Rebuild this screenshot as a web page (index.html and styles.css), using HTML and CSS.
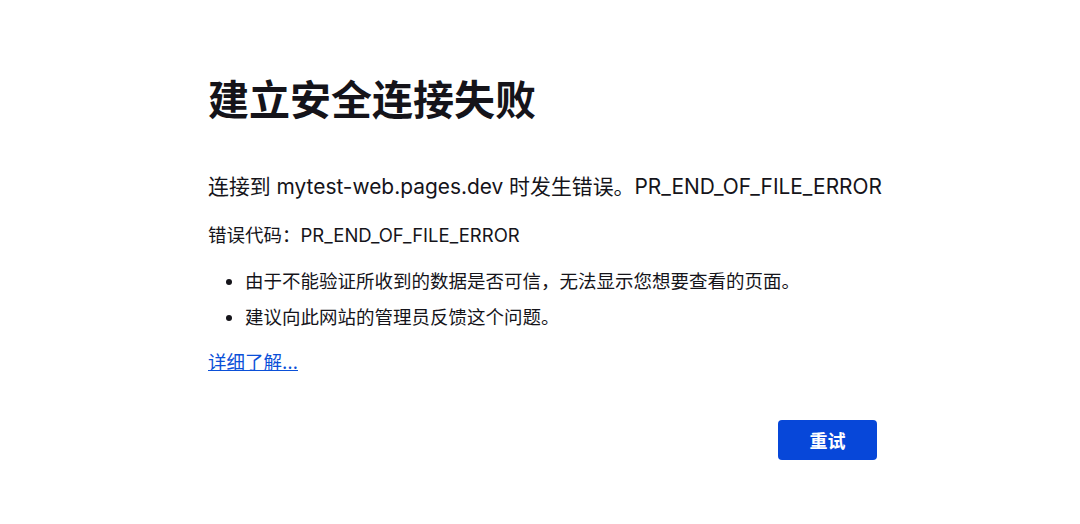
FILE: index.html
```html
<!DOCTYPE html>
<html lang="zh-CN">
<head>
<meta charset="utf-8">
<title>建立安全连接失败</title>
<link rel="stylesheet" href="styles.css">
</head>
<body>
<main class="container">
  <h1 class="title">建立安全连接失败</h1>
  <p class="short-desc">连接到 mytest-web.pages.dev 时发生错误。PR_END_OF_FILE_ERROR</p>
  <p class="code">错误代码：PR_END_OF_FILE_ERROR</p>
  <ul class="long-desc">
    <li>由于不能验证所收到的数据是否可信，无法显示您想要查看的页面。</li>
    <li>建议向此网站的管理员反馈这个问题。</li>
  </ul>
  <a class="learn-more" href="#">详细了解…</a>
  <div class="actions">
    <button class="retry" type="button">重试</button>
  </div>
</main>
</body>
</html>
```

FILE: styles.css
```css
html, body {
  margin: 0;
  padding: 0;
  background: #ffffff;
}

body {
  font-family: Inter, "Noto Sans CJK SC", sans-serif;
  color: #15141a;
}

.container {
  display: flex;
  flex-direction: column;
  align-items: flex-start;
  width: 669px;
  padding: 76px 0 0 208px;
}

.title {
  margin: 0;
  font-size: 41px;
  line-height: 48px;
  font-weight: 700;
}

.short-desc {
  margin: 49px 0 0;
  font-size: 20.9px;
  line-height: 28px;
  white-space: nowrap;
}

.code {
  margin: 20px 0 0;
  font-size: 18.5px;
  line-height: 28px;
}

.long-desc {
  margin: 18px 0 0;
  padding-left: 37px;
  font-size: 18.5px;
  line-height: 28px;
}

.long-desc li + li {
  margin-top: 8px;
}

.learn-more {
  margin-top: 17px;
  font-size: 18.5px;
  line-height: 28px;
  color: #0b50d8;
  text-decoration: underline;
}

.actions {
  align-self: stretch;
  display: flex;
  justify-content: flex-end;
  margin-top: 44px;
}

.retry {
  width: 99px;
  height: 40px;
  border: none;
  border-radius: 4px;
  background: #0747d9;
  color: #ffffff;
  font-family: Inter, "Noto Sans CJK SC", sans-serif;
  font-size: 18px;
  font-weight: 700;
}
```
